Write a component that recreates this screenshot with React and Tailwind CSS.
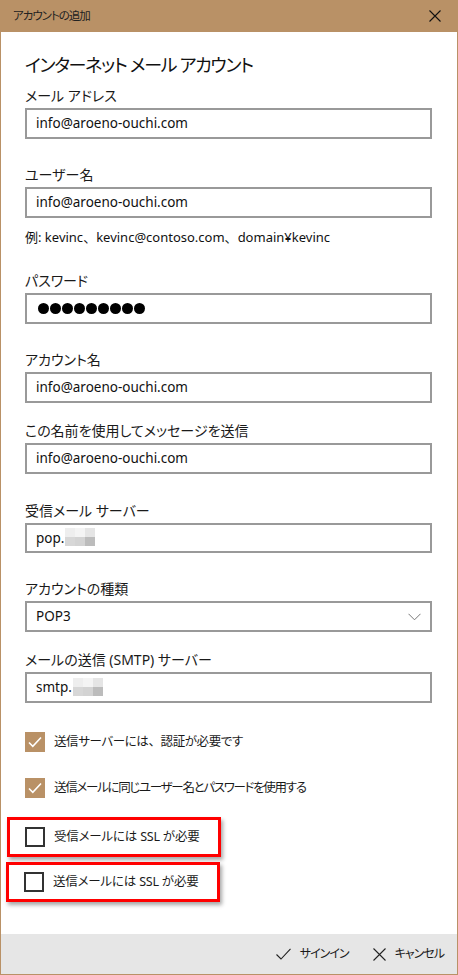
import React from 'react';

const TAN = 'bg-[#b99166]';

const Field = ({ label, children, className = '' }) => (
  <div className={className}>
    <div className="h-[26px] flex items-center text-[14px] text-[#1a1a1a]">{label}</div>
    {children}
  </div>
);

const TextBox = ({ children }) => (
  <div className="h-[31px] w-[407px] border-2 border-[#999999] flex items-center pl-[9px] text-[13.5px] text-[#111]">
    {children}
  </div>
);

// pixelated censor squares after the server prefix
const Mosaic = () => (
  <span className="inline-grid grid-cols-3 ml-[1px] -translate-y-[1px]">
    <span className="w-[10px] h-[9px] bg-[#eeeeee]" />
    <span className="w-[10px] h-[9px] bg-[#f4f4f4]" />
    <span className="w-[10px] h-[9px] bg-[#e5e5e5]" />
    <span className="w-[10px] h-[9px] bg-[#d7d7d7]" />
    <span className="w-[10px] h-[9px] bg-[#d3d3d3]" />
    <span className="w-[10px] h-[9px] bg-[#bcbcbc]" />
  </span>
);

const Comma = () => <span className="[font-feature-settings:normal]">、</span>;

const Checked = ({ children, tight }) => (
  <div className="flex items-center h-[22px]">
    <span className={`w-[20px] h-[20px] ${TAN} flex items-center justify-center`}>
      <svg width="14" height="12" viewBox="0 0 14 12" fill="none">
        <path d="M1 6.5 L4.8 10.3 L13 1.5" stroke="#fff" strokeWidth="1.6" />
      </svg>
    </span>
    <span
      className={`ml-[9px] text-[12.5px] ${tight ? 'tracking-[-1.3px]' : 'tracking-[-0.4px]'} text-[#1a1a1a] whitespace-nowrap`}
    >
      {children}
    </span>
  </div>
);

const Unchecked = ({ label, className }) => (
  <div
    className={`w-[214px] h-[40px] border-[3px] border-[#ff0000] shadow-[2px_3px_4px_rgba(0,0,0,0.35)] flex items-center pl-[15px] ${className}`}
  >
    <span className="w-[20px] h-[20px] border-2 border-[#333333] shrink-0" />
    <span className="ml-[9px] text-[12.5px] tracking-[-0.2px] text-[#1a1a1a] whitespace-nowrap">{label}</span>
  </div>
);

export default function App() {
  return (
    <div className="w-[458px] h-[975px] flex flex-col font-['Noto_Sans','Noto_Sans_CJK_JP',sans-serif] [font-feature-settings:'palt'] bg-white">
      {/* title bar */}
      <div className={`h-[32px] ${TAN} flex items-center justify-between pl-[13px] pr-[17px] shrink-0`}>
        <span className="text-[11.5px] tracking-[-1px] text-[#222]">アカウントの追加</span>
        <svg width="12" height="12" viewBox="0 0 12 12">
          <path d="M0.5 0.5 L11.5 11.5 M11.5 0.5 L0.5 11.5" stroke="#111" strokeWidth="1.1" />
        </svg>
      </div>

      <div className="flex-1 flex flex-col border-x border-[#b99166]">
        <div className="flex-1 pl-[24px]">
          <h1 className="mt-[18px] h-[30px] flex items-center text-[18px] tracking-[-1.3px] text-[#111] font-normal">
            インターネット メール アカウント
          </h1>

          <Field label="メール アドレス" className="mt-[2px]">
            <TextBox>info@aroeno-ouchi.com</TextBox>
          </Field>

          <Field label="ユーザー名" className="mt-[22px]">
            <TextBox>info@aroeno-ouchi.com</TextBox>
          </Field>
          <div className="h-[40px] flex items-center text-[13px] text-[#111]">
            例: kevinc<Comma />kevinc@contoso.com<Comma />domain¥kevinc
          </div>

          <Field label="パスワード" className="mt-[9px]">
            <div className="h-[31px] w-[407px] border-2 border-[#999999] flex items-center pl-[11px] gap-[1px]">
              {Array.from({ length: 9 }).map((_, i) => (
                <span key={i} className="w-[11px] h-[11px] rounded-full bg-black" />
              ))}
            </div>
          </Field>

          <Field label="アカウント名" className="mt-[22px]">
            <TextBox>info@aroeno-ouchi.com</TextBox>
          </Field>

          <Field label="この名前を使用してメッセージを送信" className="mt-[14px]">
            <TextBox>info@aroeno-ouchi.com</TextBox>
          </Field>

          <Field label="受信メール サーバー" className="mt-[23px]">
            <div className="h-[30px] w-[407px] border-2 border-[#999999] flex items-center pl-[9px] text-[13.5px] text-[#111]">
              pop.<Mosaic />
            </div>
          </Field>

          <Field label="アカウントの種類" className="mt-[22px]">
            <div className="h-[31px] w-[407px] border-2 border-[#999999] flex items-center justify-between pl-[9px] pr-[9px] text-[13.5px] text-[#111]">
              <span>POP3</span>
              <svg width="13" height="8" viewBox="0 0 13 8" fill="none">
                <path d="M0.5 0.8 L6.5 6.8 L12.5 0.8" stroke="#777" strokeWidth="1" />
              </svg>
            </div>
          </Field>

          <Field label="メールの送信 (SMTP) サーバー" className="mt-[14px]">
            <div className="h-[31px] w-[407px] border-2 border-[#999999] flex items-center pl-[9px] text-[13.5px] text-[#111]">
              smtp.<Mosaic />
            </div>
          </Field>

          <div className="mt-[28px]">
            <Checked>送信サーバーには<Comma />認証が必要です</Checked>
          </div>
          <div className="mt-[24px]">
            <Checked tight>送信メールに同じユーザー名とパスワードを使用する</Checked>
          </div>
        </div>

        <div className="pb-[32px]">
          <Unchecked label="受信メールには SSL が必要" className="ml-[6px]" />
          <Unchecked label="送信メールには SSL が必要" className="ml-[5px] mt-[5px]" />
        </div>

        {/* footer */}
        <div className="h-[40px] bg-[#e6e6e6] flex items-center justify-end pr-[13px] text-[12px] tracking-[-1px] text-[#1a1a1a] shrink-0">
          <svg width="15" height="12" viewBox="0 0 15 12" fill="none">
            <path d="M0.5 6.5 L5 11 L14.5 0.8" stroke="#222" strokeWidth="1.1" />
          </svg>
          <span className="ml-[9px]">サインイン</span>
          <svg width="13" height="13" viewBox="0 0 13 13" className="ml-[24px]">
            <path d="M0.5 0.5 L12.5 12.5 M12.5 0.5 L0.5 12.5" stroke="#222" strokeWidth="1.1" />
          </svg>
          <span className="ml-[9px]">キャンセル</span>
        </div>
      </div>
      <div className={`h-[1px] ${TAN} shrink-0`} />
    </div>
  );
}
